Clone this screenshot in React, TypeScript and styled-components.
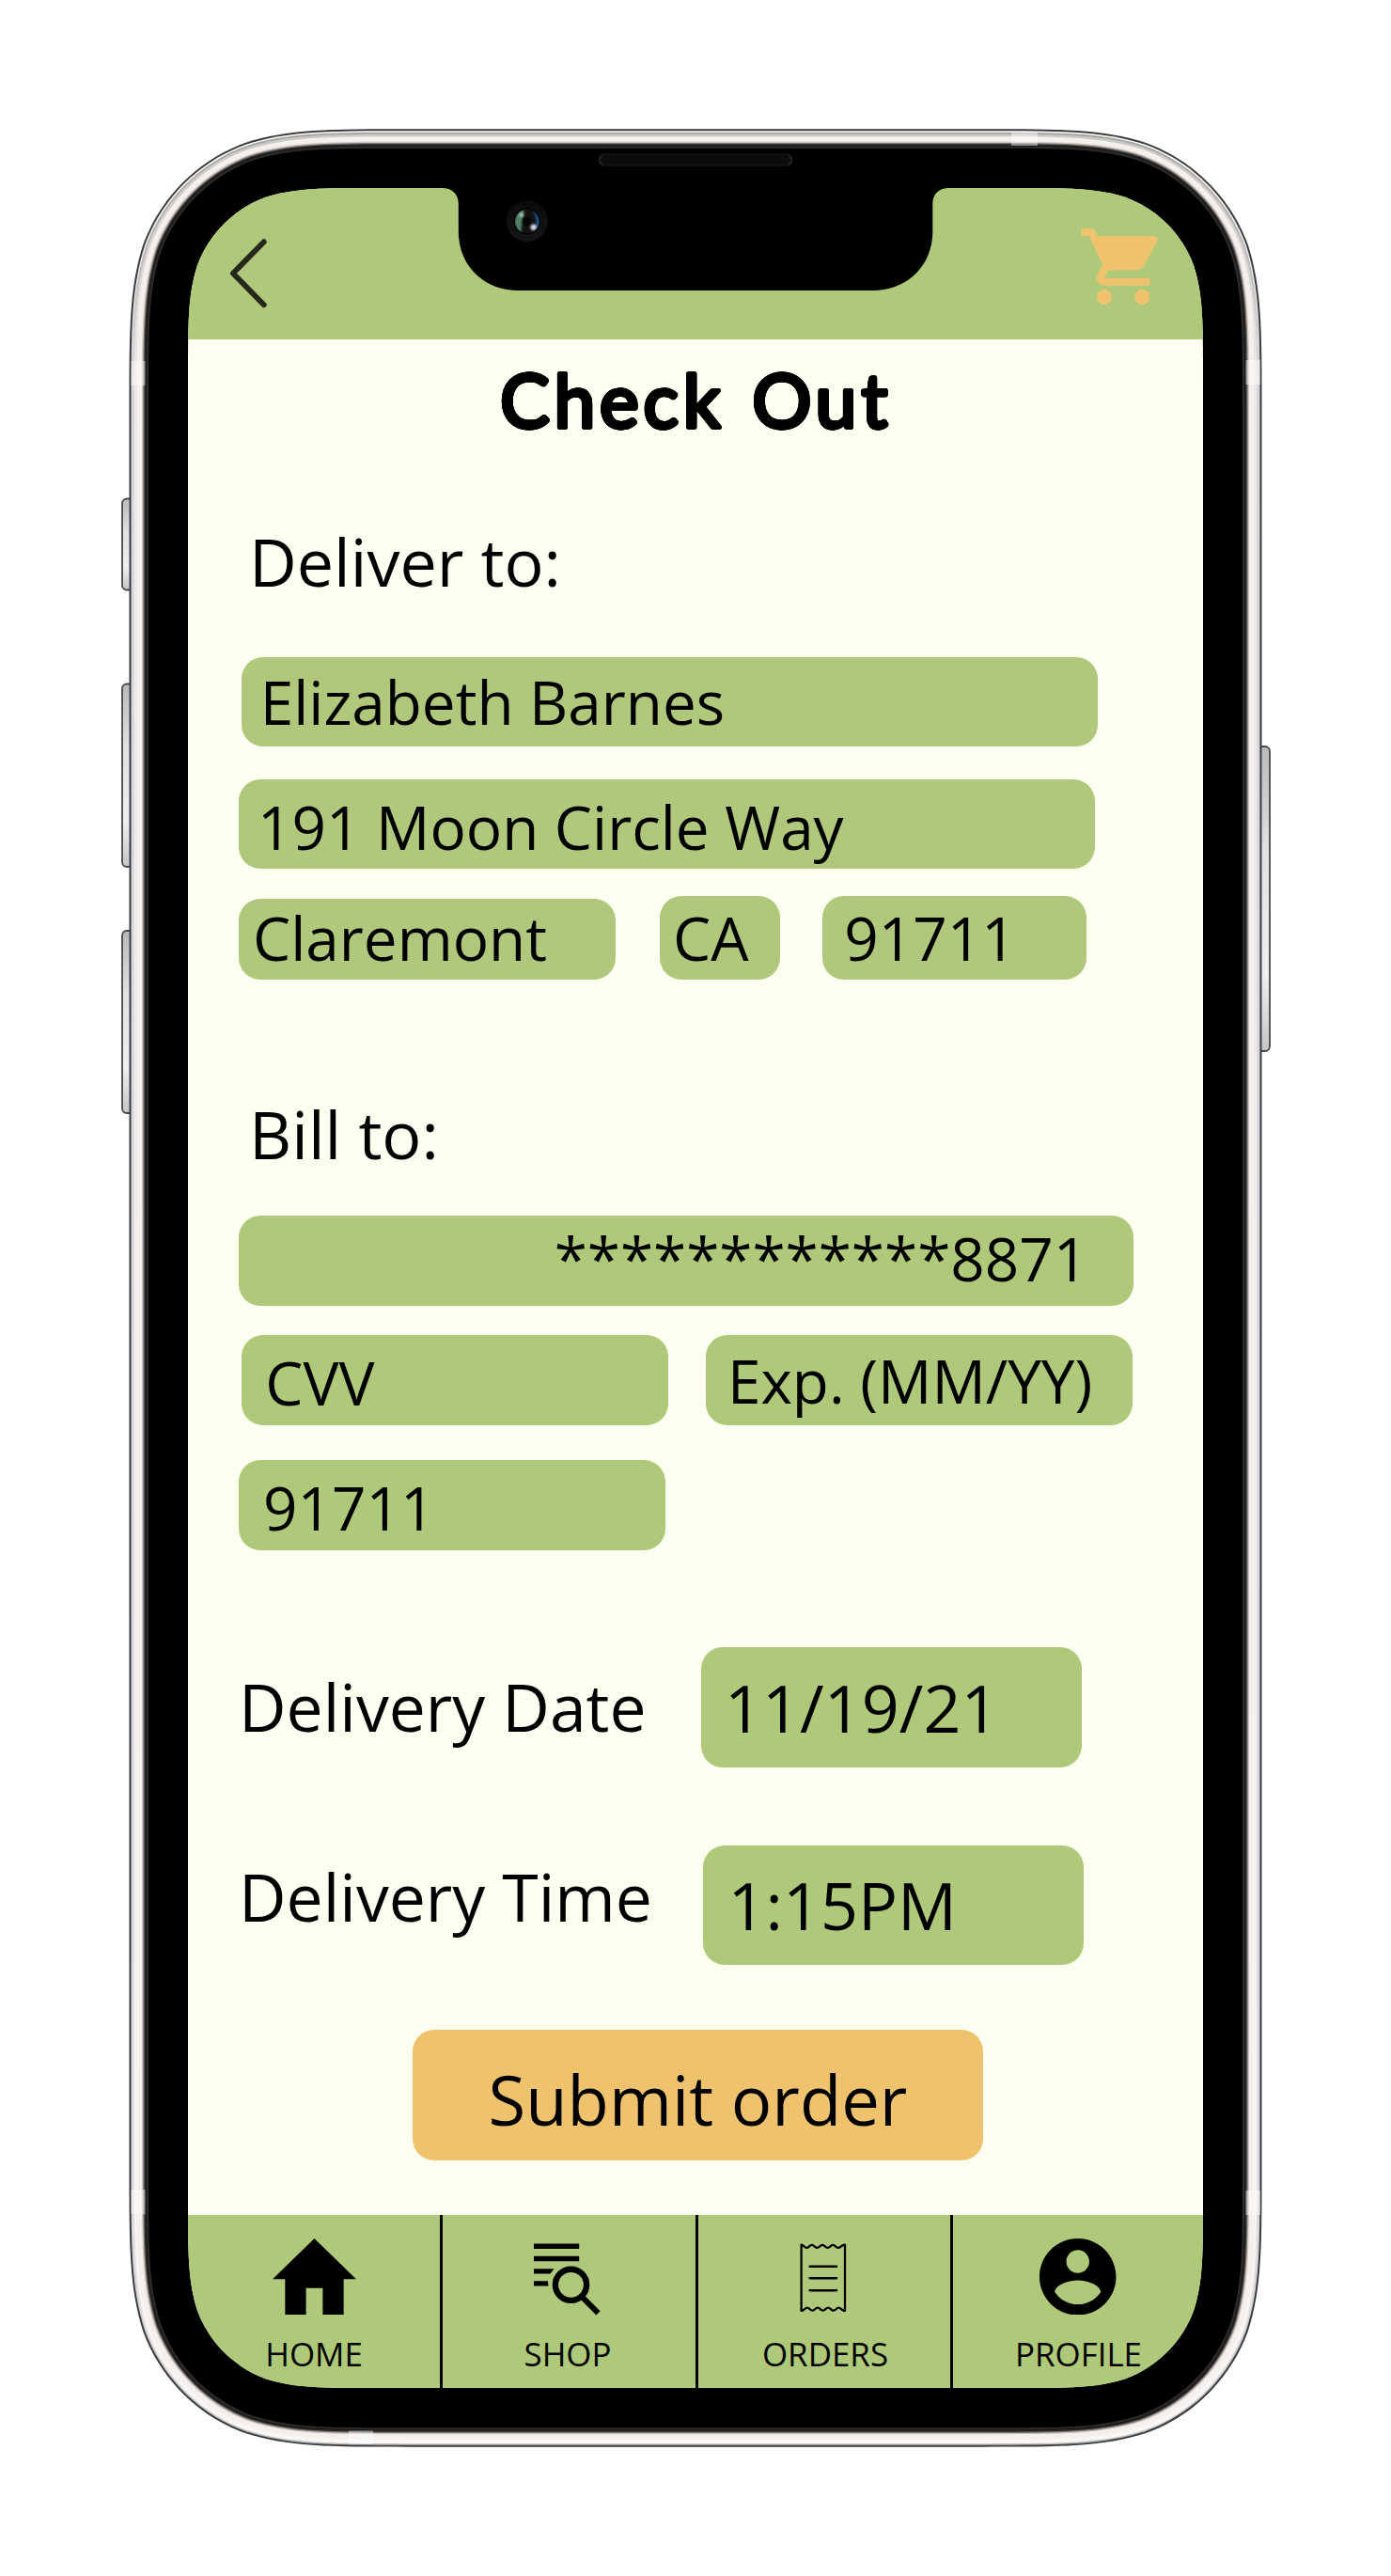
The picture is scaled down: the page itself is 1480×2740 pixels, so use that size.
import React from "react";
import styled, { createGlobalStyle } from "styled-components";

const GlobalStyle = createGlobalStyle`
  *, *::before, *::after { box-sizing: border-box; }
  body { margin: 0; background: #ffffff; }
`;

const color = {
  cream: "#fdfff1",
  green: "#aec97a",
  field: "#afc87c",
  amber: "#efc36d",
  ink: "#000000",
};

/* Continuous-curvature rounded rectangle, as used for phone corners. */
const squircle = (x: number, y: number, w: number, h: number, r: number) => {
  const a = 1.52866 * r;
  const b = 1.08849 * r;
  const c = 0.86841 * r;
  const d = 0.63149 * r;
  const e = 0.07491 * r;
  const f = 0.37282 * r;
  const g = 0.16906 * r;
  const R = x + w;
  const B = y + h;
  return [
    `M${x + a} ${y}L${R - a} ${y}`,
    `C${R - b} ${y} ${R - c} ${y} ${R - d} ${y + e}`,
    `C${R - f} ${y + g} ${R - g} ${y + f} ${R - e} ${y + d}`,
    `C${R} ${y + c} ${R} ${y + b} ${R} ${y + a}`,
    `L${R} ${B - a}`,
    `C${R} ${B - b} ${R} ${B - c} ${R - e} ${B - d}`,
    `C${R - g} ${B - f} ${R - f} ${B - g} ${R - d} ${B - e}`,
    `C${R - c} ${B} ${R - b} ${B} ${R - a} ${B}`,
    `L${x + a} ${B}`,
    `C${x + b} ${B} ${x + c} ${B} ${x + d} ${B - e}`,
    `C${x + f} ${B - g} ${x + g} ${B - f} ${x + e} ${B - d}`,
    `C${x} ${B - c} ${x} ${B - b} ${x} ${B - a}`,
    `L${x} ${y + a}`,
    `C${x} ${y + b} ${x} ${y + c} ${x + e} ${y + d}`,
    `C${x + g} ${y + f} ${x + f} ${y + g} ${x + d} ${y + e}`,
    `C${x + c} ${y} ${x + b} ${y} ${x + a} ${y}Z`,
  ].join("");
};

const Page = styled.main`
  position: relative;
  width: 1480px;
  height: 2740px;
  padding: 200px;
  overflow: hidden;
  background: #ffffff;
  color: ${color.ink};
  font-family: "Open Sans", "Noto Sans", sans-serif;
`;

const Shell = styled.svg`
  position: absolute;
  inset: 0;
  pointer-events: none;
`;

const Screen = styled.div`
  position: relative;
  display: flex;
  flex-direction: column;
  width: 1080px;
  height: 2340px;
  background: ${color.cream};
  clip-path: path("${squircle(0, 0, 1080, 2340, 131)}");
`;

const Notch = styled.svg`
  position: absolute;
  top: 0;
  left: 270px;
`;

const Header = styled.header`
  display: flex;
  flex: none;
  justify-content: space-between;
  align-items: flex-start;
  height: 161.3px;
  padding: 34px 44px 0 42px;
  background: ${color.green};
`;

const IconButton = styled.button`
  display: flex;
  padding: 0;
  border: 0;
  background: none;
`;

const BackIcon = styled.svg`
  margin-top: 16px;
`;

const Title = styled.h1`
  margin: 24px 0 0 332px;
  font-family: Lato, "Open Sans", sans-serif;
  font-size: 79px;
  font-weight: 400;
  line-height: 79px;
  letter-spacing: 4.6px;
  word-spacing: 4px;
  white-space: nowrap;
  text-shadow: ${Array.from({ length: 24 }, (_, i) => {
    const t = (i / 24) * Math.PI * 2;
    return `${(Math.cos(t) * 2).toFixed(2)}px ${(Math.sin(t) * 2).toFixed(2)}px 0 #000`;
  }).join(", ")};
`;

const Form = styled.form`
  display: flex;
  flex: 1;
  flex-direction: column;
  align-items: flex-start;
  padding-left: 54px;
`;

const SectionTitle = styled.h2<{ $top: number }>`
  margin: ${(p) => p.$top}px 0 0 11px;
  font-size: 70px;
  font-weight: 400;
  line-height: 70px;
  white-space: nowrap;
`;

const Row = styled.div<{ $top: number; $align?: string }>`
  display: flex;
  align-items: ${(p) => p.$align ?? "flex-start"};
  margin-top: ${(p) => p.$top}px;
`;

interface FieldProps {
  $w: number;
  $h?: number;
  $left?: number;
  $pad: [number, number];
  $right?: boolean;
  $tone?: string;
}

const Field = styled.div<FieldProps>`
  width: ${(p) => p.$w}px;
  height: ${(p) => p.$h ?? 95.5}px;
  margin-left: ${(p) => p.$left ?? 0}px;
  padding: ${(p) => p.$pad[0]}px ${(p) => (p.$right ? p.$pad[1] : 0)}px 0
    ${(p) => (p.$right ? 0 : p.$pad[1])}px;
  border-radius: 23px;
  background: ${(p) => p.$tone ?? color.green};
  font-size: 63.8px;
  line-height: 64px;
  text-align: ${(p) => (p.$right ? "right" : "left")};
  white-space: nowrap;
`;

const LargeField = styled(Field)`
  height: 127.5px;
  font-size: 70px;
  line-height: 70px;
`;

const Label = styled.label<{ $top: number; $w: number }>`
  width: ${(p) => p.$w}px;
  padding-top: ${(p) => p.$top}px;
  font-size: 69.7px;
  line-height: 70px;
  white-space: nowrap;
`;

const Submit = styled.button`
  display: flex;
  justify-content: center;
  align-items: flex-start;
  width: 607px;
  height: 139px;
  margin: 69px 0 0 185px;
  padding: 37.5px 0 0;
  border: 0;
  border-radius: 23px;
  background: ${color.amber};
  color: inherit;
  font: 400 72.4px/73px "Open Sans", "Noto Sans", sans-serif;
  white-space: nowrap;
`;

const TabBar = styled.nav`
  display: grid;
  flex: none;
  grid-template-columns: 268px 272px 271px 1fr;
  height: 184.5px;
  background: ${color.green};
`;

const Tab = styled.a<{ $shift: number }>`
  display: flex;
  flex-direction: column;
  align-items: center;
  padding-left: ${(p) => p.$shift}px;
  color: inherit;
  font-size: 34.9px;
  line-height: 35px;
  white-space: nowrap;

  & + & {
    box-shadow: inset 3px 0 0 ${color.ink};
  }
`;

const TabIcon = styled.span<{ $shift?: number }>`
  display: flex;
  align-items: flex-start;
  height: 105.7px;
  margin: 25px 0 0 ${(p) => p.$shift ?? 0}px;
`;

const frameLayers: [number, string][] = [
  [0, "#393c3f"],
  [2, "url(#rim)"],
  [3.5, "url(#band1)"],
  [5.5, "url(#band2)"],
  [8, "#f3f0ee"],
  [12, "#f1edea"],
  [13.5, "#c9c3be"],
  [14.8, "#7c7672"],
  [16, "#2a2928"],
  [17.5, "#171717"],
  [18.5, "#2c2d2c"],
  [20.5, "#000000"],
];

function PhoneShell() {
  return (
    <Shell width="1480" height="2740" viewBox="0 0 1480 2740" aria-hidden="true">
      <defs>
        <linearGradient id="rim" x1="0" y1="0" x2="0" y2="1">
          <stop offset="0" stopColor="#ffffff" />
          <stop offset="0.1" stopColor="#d4d4dc" />
          <stop offset="0.92" stopColor="#d4d4dc" />
          <stop offset="1" stopColor="#b9bdbf" />
        </linearGradient>
        <linearGradient id="band1" x1="0" y1="0" x2="0" y2="1">
          <stop offset="0" stopColor="#a5a5a2" />
          <stop offset="0.05" stopColor="#b8b6b5" />
          <stop offset="0.1" stopColor="#dcdadd" />
          <stop offset="0.93" stopColor="#e2e0e2" />
          <stop offset="1" stopColor="#fbf8f5" />
        </linearGradient>
        <linearGradient id="band2" x1="0" y1="0" x2="0" y2="1">
          <stop offset="0" stopColor="#cbc9c6" />
          <stop offset="0.05" stopColor="#d8d5d3" />
          <stop offset="0.1" stopColor="#eae7e6" />
          <stop offset="1" stopColor="#faf6f3" />
        </linearGradient>
        <linearGradient id="key" x1="0" y1="0" x2="0" y2="1">
          <stop offset="0" stopColor="#b9babb" />
          <stop offset="0.35" stopColor="#e2e2e3" />
          <stop offset="0.75" stopColor="#efeff0" />
          <stop offset="1" stopColor="#c6c7c8" />
        </linearGradient>
      </defs>
      {[
        [130, 530.5, 97],
        [130, 727.5, 194.5],
        [130, 990, 194],
        [1333, 794, 324],
      ].map(([x, y, h]) => (
        <rect key={y} x={x} y={y} width="18" height={h} rx="5" fill="url(#key)" stroke="#46484a" strokeWidth="1.8" />
      ))}
      {frameLayers.map(([inset, fill]) => (
        <path
          key={inset}
          d={squircle(137.5 + inset, 137.3 + inset, 1205 - inset * 2, 2465.4 - inset * 2, 195 - inset)}
          fill={fill}
        />
      ))}
      <g fill="#ffffff" fillOpacity="0.45">
        <rect x="139.5" y="384" width="15" height="26" />
        <rect x="1325.5" y="383" width="15.5" height="26" />
        <rect x="1076" y="140" width="28" height="15" />
        <rect x="371" y="2585.5" width="26" height="14.500" />
        <rect x="139.500" y="2329" width="15" height="26" />
        <rect x="1325.500" y="2330" width="15.500" height="26" />
      </g>
      <rect x="637.5" y="164" width="205" height="12" rx="5.5" fill="#0c0c0c" stroke="#151515" strokeWidth="1.4" />
      <path d="M641 165.500q-3 1-3 4.500t3 4.500M839 165.500q3 1 3 4.500t-3 4.500" fill="none" stroke="#2e2e2e" strokeWidth="1.200" />
    </Shell>
  );
}

function NotchArt() {
  return (
    <Notch width="540" height="112" viewBox="0 0 540 112" aria-hidden="true">
      <defs>
        <linearGradient id="ring" x1="0" y1="0" x2="0" y2="1">
          <stop offset="0" stopColor="#0a0a0a" />
          <stop offset="1" stopColor="#161616" />
        </linearGradient>
        <clipPath id="lens">
          <circle cx="90.800" cy="35.500" r="12.800" />
        </clipPath>
        <filter id="soft" x="-50%" y="-50%" width="200%" height="200%">
          <feGaussianBlur stdDeviation="0.9" />
        </filter>
      </defs>
      <path d="M0 0C11 0 17.800 6 17.800 17V46C17.800 83 45 109 82 109H458.500C495 109 522.300 83 522.300 46V17C522.300 6 529 0 540 0Z" />
      <circle cx="90.800" cy="35" r="22" fill="url(#ring)" />
      <circle cx="90.800" cy="35.500" r="14" fill="#030303" />
      <g clipPath="url(#lens)">
        <rect x="76" y="20" width="30" height="32" fill="#121212" />
        <g filter="url(#soft)">
          <path d="M84 22C75 28 75 44 84 49C86 40 84 34 88 24Z" fill="#4f8069" />
          <path d="M96 22C100 28 102 34 100 48C107 44 107 30 96 22Z" fill="#1c5a9e" />
        </g>
        <circle cx="90.800" cy="35.500" r="4.500" fill="#050505" />
        <circle cx="85" cy="28.800" r="2.200" fill="#b4cbbf" filter="url(#soft)" />
        <circle cx="97.700" cy="41.700" r="3.200" fill="#d9d8ea" filter="url(#soft)" />
      </g>
    </Notch>
  );
}

const HomeIcon = () => (
  <svg width="89" height="81.500" viewBox="2 3 20 17" preserveAspectRatio="none">
    <path d="M10 20v-6h4v6h5v-8h3L12 3 2 12h3v8z" />
  </svg>
);

const ShopIcon = () => (
  <svg width="74" height="82" viewBox="0 0 74 82">
    <path d="M2 5.500h48.200v5.500h-48.200zM2 18.800h48.200v5.400h-48.200zM2 32.200h21.600q-2.300 2.500-4 5.400h-17.600zM2 45.200h15q0 2.800.6 5.400h-15.600z" />
    <circle cx="41.500" cy="49.300" r="16.600" fill="none" stroke="#000" strokeWidth="6.400" />
    <path d="M53.500 62.300 70.500 79.300" fill="none" stroke="#000" strokeWidth="6" />
  </svg>
);

const ReceiptIcon = () => (
  <svg width="52" height="78" viewBox="0 0 52 78" fill="none" stroke="#000" strokeLinecap="round" strokeLinejoin="round">
    <path
      strokeWidth="2.300"
      d="M2.600 73.300V6.600C5 6.600 5.700 9.900 8.200 9.900S11.500 6.900 13.800 6.900S17 9.900 19.400 9.900S22.700 6.900 25 6.900S28.200 9.900 30.600 9.900S33.900 6.900 36.200 6.900S39.400 9.900 41.800 9.900S45.500 6.600 49 6.600V77C45.500 77 45 73.700 42.400 73.700S39.300 76.700 36.800 76.700S33.600 73.700 31.200 73.700S28 76.700 25.600 76.700S22.400 73.700 20 73.700S16.800 76.700 14.400 76.700S11.200 73.700 8.800 73.700S5.500 77 2.600 77Z"
    />
    <path strokeWidth="2.600" d="M11.700 29.700H40M11.700 42.200H40M11.700 55.200H40" />
  </svg>
);

const ProfileIcon = () => (
  <svg width="81.500" height="81.500" viewBox="2 2 20 20">
    <path d="M12 2C6.480 2 2 6.480 2 12s4.480 10 10 10 10-4.480 10-10S17.520 2 12 2zm0 3c1.660 0 3 1.340 3 3s-1.340 3-3 3-3-1.340-3-3 1.340-3 3-3zm0 14.200c-2.500 0-4.710-1.280-6-3.220.03-1.990 4-3.080 6-3.080 1.990 0 5.970 1.090 6 3.080-1.290 1.940-3.500 3.220-6 3.220z" />
  </svg>
);

const tabs = [
  { name: "HOME", icon: <HomeIcon />, shift: 0, iconShift: 0 },
  { name: "SHOP", icon: <ShopIcon />, shift: 0, iconShift: -2 },
  { name: "ORDERS", icon: <ReceiptIcon />, shift: 5, iconShift: -5 },
  { name: "PROFILE", icon: <ProfileIcon />, shift: 4, iconShift: -1 },
];

export default function App() {
  return (
    <Page>
      <GlobalStyle />
      <PhoneShell />
      <Screen>
        <Header>
          <IconButton aria-label="Back">
            <BackIcon width="48" height="84" viewBox="242 250 48 84" fill="none">
              <path
                d="M280.800 257.200 247.900 290.700 280.800 324.200"
                stroke="#25281a"
                strokeWidth="5.800"
                strokeLinecap="round"
                strokeLinejoin="round"
              />
            </BackIcon>
          </IconButton>
          <IconButton aria-label="Cart">
            <svg width="90" height="92" viewBox="1146 234 90 92" fill={color.amber}>
              <path
                transform="translate(1146.500 234.900) scale(4.050)"
                d="M7 18c-1.100 0-1.990.9-1.990 2S5.900 22 7 22s2-.9 2-2-.9-2-2-2zM1 2v2h2l3.600 7.590-1.350 2.450c-.16.28-.25.61-.25.96 0 1.100.9 2 2 2h12v-2H7.420c-.14 0-.25-.11-.25-.25l.03-.12.9-1.630h7.450c.75 0 1.410-.41 1.750-1.030l3.580-6.490c.08-.14.12-.31.12-.48 0-.55-.45-1-1-1H5.210l-.94-2H1zm16 16c-1.100 0-1.990.9-1.990 2s.89 2 1.990 2 2-.9 2-2-.9-2-2-2z"
              />
            </svg>
          </IconButton>
        </Header>

        <Title>Check Out</Title>

        <Form>
          <SectionTitle $top={97.7}>Deliver to:</SectionTitle>
          <Row $top={67}>
            <Field $w={910.500} $h={95} $left={3} $pad={[16.5, 19.8]} $tone={color.field}>
              Elizabeth Barnes
            </Field>
          </Row>
          <Row $top={35}>
            <Field $w={910.5} $h={95} $pad={[19, 20]} $tone={color.field}>
              191 Moon Circle Way
            </Field>
          </Row>
          <Row $top={28.800} $align="flex-end">
            <Field $w={401} $h={86.500} $pad={[10.5, 15]} $tone={color.field}>
              Claremont
            </Field>
            <Field $w={127.5} $h={89.500} $left={47.3} $pad={[13.5, 13.800]} $tone={color.field}>
              CA
            </Field>
            <Field $w={281} $h={89.500} $left={45.5} $pad={[13.5, 23]} $tone={color.field}>
              91711
            </Field>
          </Row>

          <SectionTitle $top={129}>Bill to:</SectionTitle>
          <Row $top={52.200}>
            <Field $w={951.5} $pad={[14, 48.3]} $right>
              ************8871
            </Field>
          </Row>
          <Row $top={31.5}>
            <Field $w={454} $left={3} $pad={[19, 25.300]}>
              CVV
            </Field>
            <Field $w={454} $left={40} $pad={[17, 23]}>
              Exp. (MM/YY)
            </Field>
          </Row>
          <Row $top={37.5}>
            <Field $w={454} $pad={[19, 26]}>
              91711
            </Field>
          </Row>

          <Row $top={103.5}>
            <Label $top={28} $w={491.500}>
              Delivery Date
            </Label>
            <LargeField $w={405} $pad={[28.5, 25.5]}>
              11/19/21
            </LargeField>
          </Row>
          <Row $top={83}>
            <Label $top={19.500} $w={494.300}>
              Delivery Time
            </Label>
            <LargeField $w={405} $pad={[28.5, 26.200]}>
              1:15PM
            </LargeField>
          </Row>

          <Submit type="button">Submit order</Submit>
        </Form>

        <TabBar>
          {tabs.map((tab) => (
            <Tab key={tab.name} $shift={tab.shift}>
              <TabIcon $shift={tab.iconShift}>{tab.icon}</TabIcon>
              {tab.name}
            </Tab>
          ))}
        </TabBar>
        <NotchArt />
      </Screen>
    </Page>
  );
}
